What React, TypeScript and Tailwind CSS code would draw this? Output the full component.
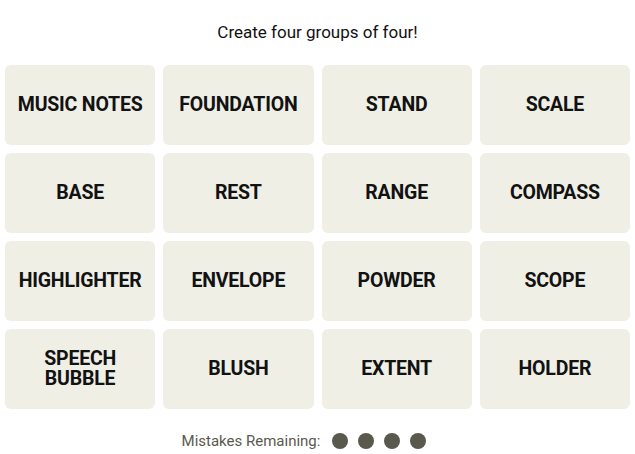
const WORDS = [
  "MUSIC NOTES", "FOUNDATION", "STAND", "SCALE",
  "BASE", "REST", "RANGE", "COMPASS",
  "HIGHLIGHTER", "ENVELOPE", "POWDER", "SCOPE",
  "SPEECH BUBBLE", "BLUSH", "EXTENT", "HOLDER",
];

export default function App() {
  return (
    <div className="w-[635px] h-[454px] bg-white font-['Roboto',sans-serif] text-black">
      <p className="pt-[22px] h-[65px] text-center text-[17px] leading-[20px] text-[#121212]">
        Create four groups of four!
      </p>
      <div className="grid grid-cols-4 gap-2 px-[5px]">
        {WORDS.map((word) => (
          <div
            key={word}
            className="h-20 rounded-md bg-[#efefe6] flex items-center justify-center px-2 text-center text-[19.5px] leading-[20px] font-bold tracking-[-0.2px] text-[#121212]"
          >
            {word}
          </div>
        ))}
      </div>
      <div className="mt-[21px] pr-[27px] flex items-center justify-center gap-[10px] text-[15px] text-[#5a594e]">
        <span className="mr-[2px]">Mistakes Remaining:</span>
        {[0, 1, 2, 3].map((i) => (
          <span key={i} className="w-4 h-4 rounded-full bg-[#5a594e]" />
        ))}
      </div>
    </div>
  );
}
